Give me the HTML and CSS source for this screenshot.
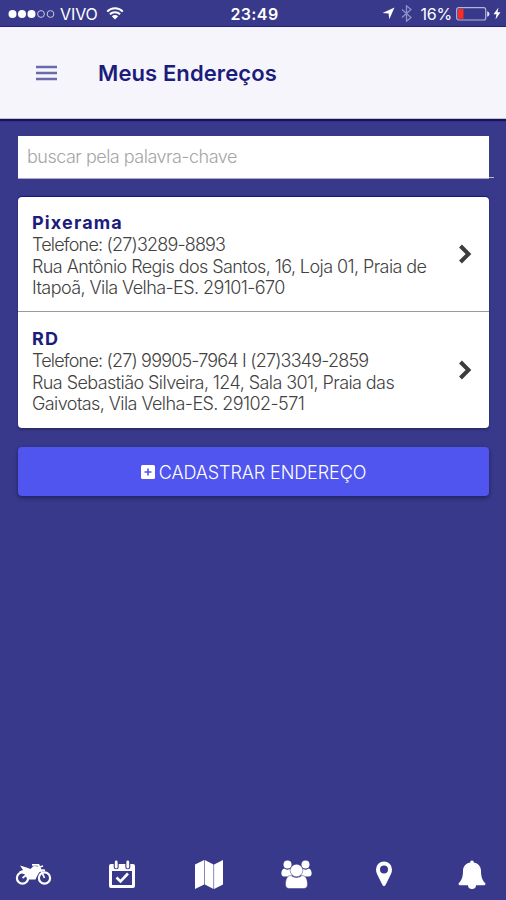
FILE: index.html
```html
<!DOCTYPE html>
<html lang="pt-BR">
    <head>
        <meta charset="utf-8">
        <title>Meus Endereços</title>
        <meta name="viewport" content="width=device-width, initial-scale=1">
        <link rel="stylesheet" href="styles.css">
    </head>
    <body>
        <div class="status-bar">
            <div class="status-left">
                <svg class="signal" width="47" height="10" viewBox="0 0 47 10">
                    <g fill="#fff"><circle cx="4.5" cy="5" r="4"/><circle cx="14" cy="5" r="4"/><circle cx="23.5" cy="5" r="4"/></g>
                    <g fill="none" stroke="#c8c8ea"><circle cx="33" cy="5" r="3.4"/><circle cx="42.5" cy="5" r="3.4"/></g>
                </svg>
                <span class="carrier">VIVO</span>
                <svg class="wifi" width="18" height="13" viewBox="0 0 18 13">
                    <path d="M1.2 4.6a11 11 0 0 1 15.6 0M3.9 7.3a7.2 7.2 0 0 1 10.2 0" fill="none" stroke="#fff" stroke-width="2"/>
                    <path d="M5.8 9.3a4.6 4.6 0 0 1 6.4 0L9 12.5z" fill="#fff"/>
                </svg>
            </div>
            <span class="clock">23:49</span>
            <div class="status-right">
                <svg class="location" width="13" height="13" viewBox="0 0 13 13"><path d="M12.5.5L7.3 12.3 6.6 6.6.5 6z" fill="#fff"/></svg>
                <svg class="bluetooth" width="11" height="17" viewBox="0 0 11 17"><path d="M1 4.5l9 8-4.5 3.7V.8L10 4.5l-9 8" fill="none" stroke="#8f8fca" stroke-width="1.3"/></svg>
                <span class="percent">16%</span>
                <svg class="battery" width="34" height="14" viewBox="0 0 34 14">
                    <rect x=".7" y=".7" width="29" height="12.3" rx="2" fill="none" stroke="#b4b4dc" stroke-width="1.2"/>
                    <rect x="2" y="2" width="5.5" height="9.8" fill="#fb2c20"/>
                    <path d="M31.2 4.2c3 1 3 4.5 0 5.5z" fill="#e4e4f5"/>
                </svg>
                <svg class="bolt" width="8" height="13" viewBox="0 0 8 13"><path d="M5.5.5L.5 7.3h3L2.5 12.5l5-7.2h-3z" fill="#fff"/></svg>
            </div>
        </div>

        <header class="header">
            <svg class="menu" width="22" height="16" viewBox="0 0 22 16"><path d="M0 2h21M0 8h21M0 14h21" stroke="#6b6bac" stroke-width="2.3"/></svg>
            <h1>Meus Endereços</h1>
        </header>

        <main class="content">
            <div class="search">
                <input type="text" placeholder="buscar pela palavra-chave">
            </div>

            <ul class="address-list">
                <li>
                    <div class="address">
                        <h2>Pixerama</h2>
                        <p class="phone">Telefone: (27)3289-8893</p>
                        <p>Rua Antônio Regis dos Santos, 16, Loja 01, Praia de</p>
                        <p>Itapoã, Vila Velha-ES. 29101-670</p>
                    </div>
                    <svg class="arrow" width="14" height="20" viewBox="0 0 14 20"><path d="M2.5 2l8 8-8 8" fill="none" stroke="#3c3c3c" stroke-width="4"/></svg>
                </li>
                <li>
                    <div class="address">
                        <h2>RD</h2>
                        <p class="phone">Telefone: (27) 99905-7964 I (27)3349-2859</p>
                        <p>Rua Sebastião Silveira, 124, Sala 301, Praia das</p>
                        <p>Gaivotas, Vila Velha-ES. 29102-571</p>
                    </div>
                    <svg class="arrow" width="14" height="20" viewBox="0 0 14 20"><path d="M2.5 2l8 8-8 8" fill="none" stroke="#3c3c3c" stroke-width="4"/></svg>
                </li>
            </ul>

            <button class="add">
                <svg width="14" height="14" viewBox="0 0 14 14"><rect width="14" height="14" rx="1.5" fill="#fff"/><path d="M7 3.5v7M3.5 7h7" stroke="#4f55ee" stroke-width="1.6"/></svg>
                <span>CADASTRAR ENDEREÇO</span>
            </button>
        </main>

        <nav class="tabs">
            <a><svg width="38" height="24" viewBox="0 0 38 24" fill="none" stroke="#fff">
                <circle cx="7.5" cy="16" r="5.6" stroke-width="2.2"/><circle cx="29.5" cy="16" r="5.6" stroke-width="2.2"/>
                <path d="M5 3.5l6.500 2 4 1.500 3-3 5 .5 2 3.500-3 5-2 4.500h-8l-2.500-5-6-3 4-1.500z" fill="#fff" stroke="none"/>
                <path d="M7.5 16l5-4M17 2.800h6.500l6 13.200M23 5.500l5-1.500M21 14c1-4 4-6.500 9-5.500" stroke-width="1.800"/>
            </svg></a>
            <a><svg width="28" height="29" viewBox="0 0 28 29">
                <path d="M3 4h22a2 2 0 0 1 2 2v20a2 2 0 0 1-2 2H3a2 2 0 0 1-2-2V6a2 2 0 0 1 2-2zM4 11v14h20V11z" fill="#fff" fill-rule="evenodd"/>
                <path d="M8.2 2.7v4M19.8 2.7v4" stroke="#38398a" stroke-width="5" stroke-linecap="round"/>
                <path d="M8.2 2v5M19.8 2v5" stroke="#fff" stroke-width="2.8" stroke-linecap="round"/>
                <path d="M8.5 17.5l4 4 7.5-8" fill="none" stroke="#fff" stroke-width="2.6"/>
            </svg></a>
            <a><svg width="28" height="29" viewBox="0 0 28 29" fill="#fff">
                <path d="M0 4.500L9.200 0v24.500L0 29zM9.800 0l8.700 4.500V29L9.800 24.500zM19.100 4.500L28 0v24.500L19.100 29z"/>
            </svg></a>
            <a><svg width="31" height="29" viewBox="0 0 31 29" fill="#fff">
                <circle cx="6.5" cy="4.5" r="4"/><circle cx="24.5" cy="4.5" r="4"/>
                <path d="M3 8.5c2 1.500 5 1.500 7 0l1 8H3c-4 0-3-7 0-8zM28 8.500c-2 1.500-5 1.500-7 0l-1 8h8c4 0 3-7 0-8z"/>
                <path d="M10 15.500c3 2.500 8 2.500 11 0 4 0 5.500 4 5.500 9 0 2.500-1.500 4-4 4h-14c-2.500 0-4-1.500-4-4 0-5 1.500-9 5.500-9z" stroke="#38398a" stroke-width=".5"/>
                <circle cx="15.500" cy="10.500" r="6.300" stroke="#38398a" stroke-width=".5"/>
            </svg></a>
            <a><svg width="18" height="26" viewBox="0 0 18 26">
                <path d="M9 .5a8 8 0 0 1 8 8c0 2.500-1 4.500-2 6.500l-4.500 9c-.7 1.500-2.300 1.500-3 0L3 15C2 13 1 11 1 8.500a8 8 0 0 1 8-8zm0 4a4 4 0 1 0 0 8 4 4 0 0 0 0-8z" fill="#fff" fill-rule="evenodd"/>
            </svg></a>
            <a><svg width="28" height="29" viewBox="0 0 28 29" fill="#fff">
                <path d="M14 .5c1.200 0 1.800.8 1.800 2C20.500 3.300 23 7 23 11c0 7 2 10 4.500 12.500 0 1.300-.8 1.800-2 1.800h-23c-1.200 0-2-.5-2-1.800C3 21 5 18 5 11c0-4 2.500-7.700 7.200-8.500 0-1.200.6-2 1.800-2z"/><path d="M10 25h8a4 4 0 0 1-8 0z"/>
            </svg></a>
        </nav>
    </body>
</html>
```
FILE: styles.css
```css
*{
    margin: 0;
    padding: 0;
    box-sizing: border-box;
}
body{
    display: flex;
    flex-direction: column;
    height: 900px;
    background-color: #38398a;
    font-family: Inter, "Liberation Sans", sans-serif;
    overflow: hidden;
}
svg{
    display: block;
    flex-shrink: 0;
}

/* status bar */
.status-bar{
    display: grid;
    grid-template-columns: 1fr auto 1fr;
    align-items: center;
    height: 27px;
    padding: 1px 5px 0 8px;
    border-bottom: 1px solid #202078;
    color: #fff;
    font-size: 16px;
}
.status-left, .status-right{
    display: flex;
    align-items: center;
}
.status-right{
    justify-content: flex-end;
}
.carrier{
    margin-left: 5px;
    letter-spacing: -.1px;
}
.wifi{
    margin-left: 8px;
}
.clock{
    font-weight: 600;
    letter-spacing: .4px;
}
.bluetooth{
    margin-left: 6px;
}
.percent{
    margin: 0 4px 0 8px;
    letter-spacing: -.2px;
}
.bolt{
    margin-left: 3px;
}

/* title */
.header{
    display: flex;
    align-items: center;
    height: 92px;
    padding: 1px 36px 0;
    background-color: #f5f5fb;
    border-bottom: 1px solid #c4c4d4;
    box-shadow: 0 2px 1px #14145e;
}
.header h1{
    margin-left: 40px;
    color: #1c1c7c;
    font-size: 22px;
    font-weight: 600;
    letter-spacing: .1px;
}

.content{
    flex: 1;
    padding: 17px 12px 0 18px;
}
.search{
    height: 43px;
    background: linear-gradient(#b9b9dc, #b9b9dc) right 0 bottom 1px / 10px 1px no-repeat;
}
.search input{
    display: block;
    width: 471px;
    height: 43px;
    padding: 0 9px 2px;
    border: 0;
    border-bottom: 1px solid #aaaacb;
    font: 300 18px Inter, sans-serif;
    letter-spacing: -.5px;
}
.search input::placeholder{
    color: #a5a5a5;
}

.address-list{
    width: 471px;
    margin-top: 18px;
    list-style: none;
    background-color: #fff;
    border-radius: 4px;
    box-shadow: 0 -1px 1px #16167c, 0 2px 2px #2a2a6c;
}
.address-list li{
    display: flex;
    align-items: center;
    justify-content: space-between;
    height: 116px;
    padding: 0 17px 0 14px;
}
.address-list li:first-child{
    height: 115px;
    border-bottom: 1px solid #9a9a9a;
}
.address{
    padding-top: 3px;
}
.address h2{
    color: #1c1c7c;
    font-size: 18px;
    font-weight: 700;
    line-height: 22px;
    letter-spacing: 1.15px;
}
.address p{
    color: #424242;
    font-size: 18px;
    font-weight: 300;
    line-height: 21.7px;
    letter-spacing: -.58px;
    white-space: nowrap;
}
.address .phone{
    letter-spacing: -.82px;
}

.add{
    display: flex;
    align-items: center;
    justify-content: center;
    gap: 4px;
    width: 471px;
    height: 49px;
    margin-top: 19px;
    padding-top: 1px;
    border: 0;
    border-radius: 4px;
    background-color: #4f55ee;
    box-shadow: 0 2px 4px rgba(0, 0, 40, .45);
    color: #fff;
    font: 300 18px Inter, sans-serif;
    letter-spacing: -.1px;
}

/* bottom tabs */
.tabs{
    display: flex;
    justify-content: space-between;
    align-items: center;
    height: 52px;
    padding: 0 15px;
}
.tabs a{
    display: flex;
    justify-content: center;
    width: 38px;
}
```
